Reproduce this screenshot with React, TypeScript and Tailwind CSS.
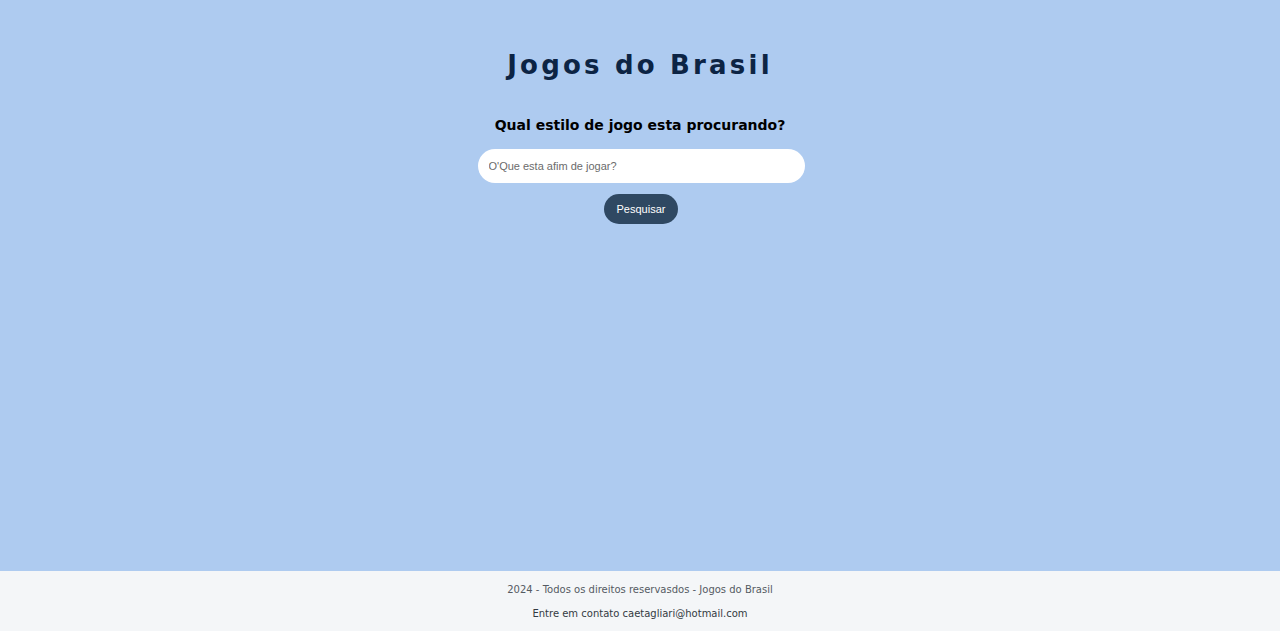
import React from "react";

export default function App() {
  return (
    <div className="min-h-[631px] flex flex-col bg-[#aecbf0]" style={{ fontFamily: "'DejaVu Sans', sans-serif" }}>
      <main className="flex-1 flex flex-col items-center pt-[48px]">
        <h1 className="text-[26px] leading-[34px] font-bold tracking-[3.2px] text-[#0c2444]">Jogos do Brasil</h1>
        <h2 className="mt-[33px] text-[14px] leading-[20px] font-bold text-black">Qual estilo de jogo esta procurando?</h2>
        <input
          className="mt-[14px] ml-[2px] w-[327px] h-[34px] rounded-full bg-white px-[11px] text-[11px] outline-none placeholder:text-[#6b6b6b]"
          style={{ fontFamily: "'Liberation Sans', Arial, sans-serif" }}
          placeholder="O'Que esta afim de jogar?"
        />
        <button
          className="mt-[11px] ml-[2px] w-[74px] h-[30px] rounded-full bg-[#2f4862] text-white text-[11px]"
          style={{ fontFamily: "'Liberation Sans', Arial, sans-serif" }}
        >
          Pesquisar
        </button>
      </main>
      <footer className="h-[60px] bg-[#f4f6f8] flex flex-col items-center pt-[11px] gap-[9px] text-[10px] leading-[15px] text-[#555b63]">
        <p>2024 - Todos os direitos reservasdos - Jogos do Brasil</p>
        <p className="text-[#333a42]">Entre em contato caetagliari@hotmail.com</p>
      </footer>
    </div>
  );
}
